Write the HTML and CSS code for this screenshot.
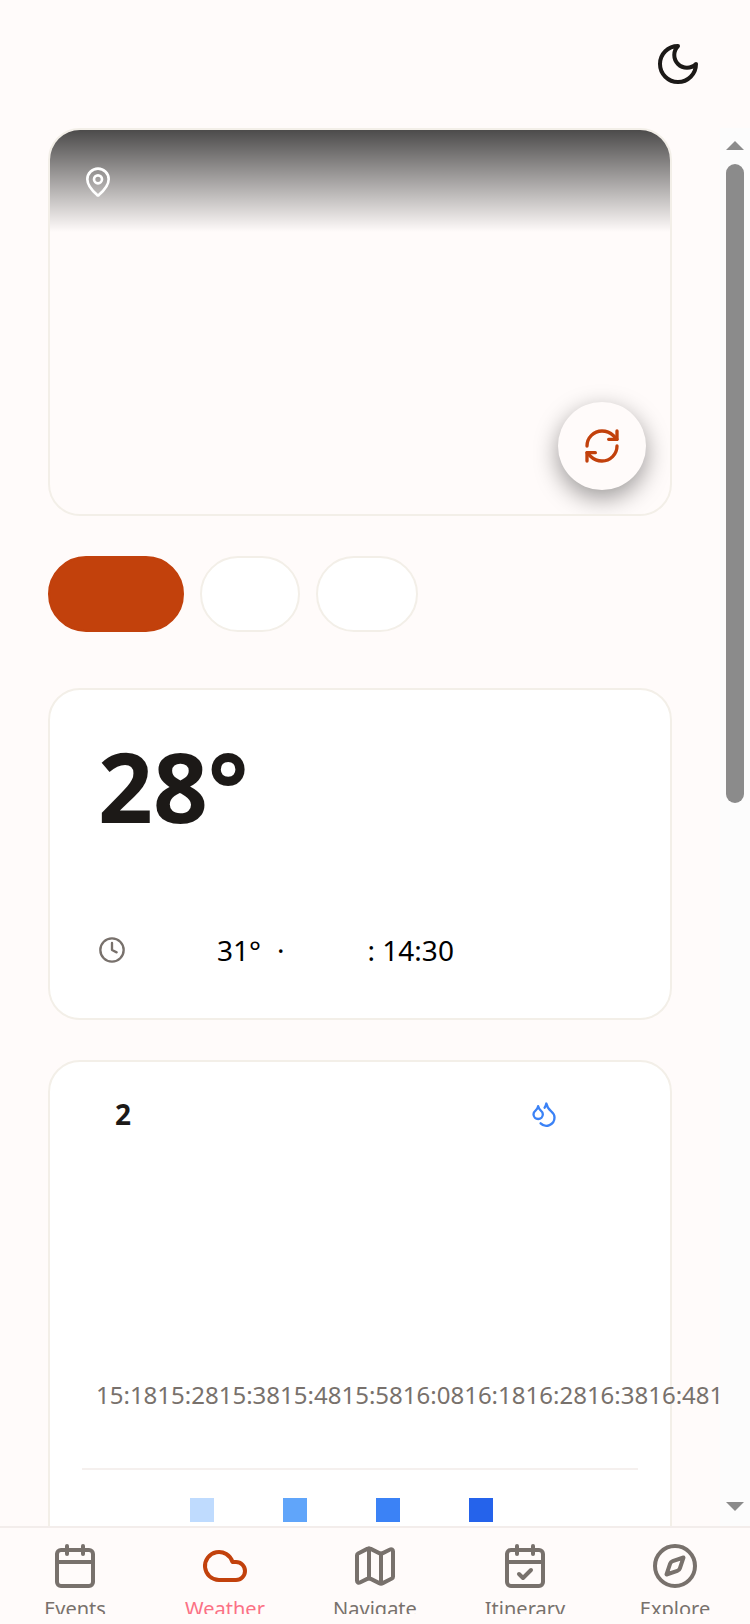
FILE: index.html
```
<!DOCTYPE html>
<html lang="en">
<head>
  <meta charset="UTF-8" />
  <meta name="viewport" content="width=device-width, initial-scale=1.0"/>
  <title>Weather</title>
  <link rel="stylesheet" href="styles.css">
</head>
<body>
  <header class="topbar">
    <button class="theme-btn" aria-label="Toggle theme">
      <svg class="icon icon-lg" viewBox="0 0 24 24"><path d="M12 3a6 6 0 0 0 9 9 9 9 0 1 1-9-9Z"/></svg>
    </button>
  </header>

  <div class="scroll-area">
    <main class="content">
      <section class="card map-card">
        <div class="map-overlay">
          <svg class="icon icon-md" viewBox="0 0 24 24"><path d="M20 10c0 4.993-5.539 10.193-7.399 11.799a1 1 0 0 1-1.202 0C9.539 20.193 4 14.993 4 10a8 8 0 0 1 16 0"/><circle cx="12" cy="10" r="3"/></svg>
        </div>
        <button class="refresh-btn" aria-label="Refresh">
          <svg class="icon" viewBox="0 0 24 24"><path d="M3 12a9 9 0 0 1 9-9 9.75 9.75 0 0 1 6.74 2.74L21 8"/><path d="M21 3v5h-5"/><path d="M21 12a9 9 0 0 1-9 9 9.75 9.75 0 0 1-6.74-2.74L3 16"/><path d="M8 16H3v5"/></svg>
        </button>
      </section>

      <div class="tabs">
        <button class="tab tab-wide active" aria-label="Current location"></button>
        <button class="tab" aria-label="Second location"></button>
        <button class="tab" aria-label="Third location"></button>
      </div>

      <section class="card now-card">
        <div class="temperature">28°</div>
        <div class="condition"></div>
        <div class="now-details">
          <svg class="icon icon-sm" viewBox="0 0 24 24"><circle cx="12" cy="12" r="10"/><path d="M12 6v6l4 2"/></svg>
          <span class="feels-label"></span>
          <span>31°</span>
          <span>·</span>
          <span><span class="updated-label"></span>: 14:30</span>
        </div>
      </section>

      <section class="card rain-card">
        <div class="rain-header">
          <h2>2</h2>
          <svg class="icon icon-sm" viewBox="0 0 24 24"><path d="M7 16.3c2.2 0 4-1.83 4-4.05 0-1.16-.57-2.26-1.71-3.19S7.29 6.75 7 5.3c-.29 1.45-1.14 2.84-2.29 3.76S3 11.1 3 12.25c0 2.22 1.8 4.05 4 4.05z"/><path d="M12.56 6.6A10.97 10.97 0 0 0 14 3.02c.5 2.5 2 4.9 4 6.5s3 3.5 3 5.5a6.98 6.98 0 0 1-11.91 4.97"/></svg>
        </div>
        <div class="rain-plot"></div>
        <div class="rain-times">
          <span>15:18</span><span>15:28</span><span>15:38</span><span>15:48</span><span>15:58</span><span>16:08</span><span>16:18</span><span>16:28</span><span>16:38</span><span>16:48</span><span>16:58</span>
        </div>
        <div class="legend">
          <span class="swatch light"></span>
          <span class="swatch moderate"></span>
          <span class="swatch heavy"></span>
          <span class="swatch intense"></span>
        </div>
      </section>
    </main>

    <div class="scrollbar" aria-hidden="true">
      <span class="arrow arrow-up"></span>
      <div class="track"><div class="thumb"></div></div>
      <span class="arrow arrow-down"></span>
    </div>
  </div>

  <nav class="bottom-nav">
    <a href="#events">
      <svg class="icon icon-lg" viewBox="0 0 24 24"><path d="M8 2v4"/><path d="M16 2v4"/><rect width="18" height="18" x="3" y="4" rx="2"/><path d="M3 10h18"/></svg>
      <span>Events</span>
    </a>
    <a href="#weather" class="current">
      <svg class="icon icon-lg" viewBox="0 0 24 24"><path d="M17.5 19H9a7 7 0 1 1 6.71-9h1.79a4.5 4.5 0 1 1 0 9Z"/></svg>
      <span>Weather</span>
    </a>
    <a href="#navigate">
      <svg class="icon icon-lg" viewBox="0 0 24 24"><path d="M14.106 5.553a2 2 0 0 0 1.788 0l3.659-1.83A1 1 0 0 1 21 4.619v12.764a1 1 0 0 1-.553.894l-4.553 2.277a2 2 0 0 1-1.788 0l-4.212-2.106a2 2 0 0 0-1.788 0l-3.659 1.83A1 1 0 0 1 3 19.381V6.618a1 1 0 0 1 .553-.894l4.553-2.277a2 2 0 0 1 1.788 0z"/><path d="M15 5.764v15"/><path d="M9 3.236v15"/></svg>
      <span>Navigate</span>
    </a>
    <a href="#itinerary">
      <svg class="icon icon-lg" viewBox="0 0 24 24"><path d="M8 2v4"/><path d="M16 2v4"/><rect width="18" height="18" x="3" y="4" rx="2"/><path d="M3 10h18"/><path d="m9 16 2 2 4-4"/></svg>
      <span>Itinerary</span>
    </a>
    <a href="#explore">
      <svg class="icon icon-lg" viewBox="0 0 24 24"><path d="m16.24 7.76-1.804 5.411a2 2 0 0 1-1.265 1.265L7.76 16.24l1.804-5.411a2 2 0 0 1 1.265-1.265z"/><circle cx="12" cy="12" r="10"/></svg>
      <span>Explore</span>
    </a>
  </nav>
</body>
</html>
```

FILE: styles.css
```
* {
  box-sizing: border-box;
}
body {
  margin: 0;
  height: 100vh;
  display: flex;
  flex-direction: column;
  overflow: hidden;
  background: #fffbfa;
  color: #1c1917;
  font-family: "Noto Sans", "Noto Sans CJK TC", sans-serif;
}
button {
  border: none;
  padding: 0;
  background: none;
  color: inherit;
  font: inherit;
  cursor: pointer;
}

/* icons */
.icon {
  display: block;
  flex-shrink: 0;
  width: 40px;
  height: 40px;
  fill: none;
  stroke: currentColor;
  stroke-width: 2;
  stroke-linecap: round;
  stroke-linejoin: round;
}
.icon-sm {
  width: 28px;
  height: 28px;
}
.icon-md {
  width: 32px;
  height: 32px;
}
.icon-lg {
  width: 48px;
  height: 48px;
}

.topbar {
  display: flex;
  justify-content: flex-end;
  padding: 40px 48px;
}

/* scrolling page */
.scroll-area {
  flex: 1;
  min-height: 0;
  display: flex;
}
.content {
  flex: 1;
  min-width: 0;
  padding: 0 48px 48px;
  overflow-x: hidden;
  overflow-y: auto;
  scrollbar-width: none;
}
.scrollbar {
  width: 30px;
  padding: 13px 6px 15px;
  display: flex;
  flex-direction: column;
  background: #fcfcfc;
}
.track {
  flex: 1;
  margin: 14px 0;
}
.thumb {
  height: 48.3%;
  border-radius: 9px;
  background: #8b8b8b;
}
.arrow {
  height: 9px;
  background: #8b8b8b;
}
.arrow-up {
  clip-path: polygon(50% 0, 100% 100%, 0 100%);
}
.arrow-down {
  clip-path: polygon(0 0, 100% 0, 50% 100%);
}

.card {
  background: white;
  border: 2px solid #f3efe8;
  border-radius: 32px;
}

/* map */
.map-card {
  position: relative;
  height: 388px;
  background: #fffbfa;
  overflow: hidden;
}
.map-overlay {
  display: flex;
  align-items: center;
  height: 102px;
  padding: 2px 32px 0;
  color: white;
  background: linear-gradient(rgba(0, 0, 0, 0.7), transparent);
}
.refresh-btn {
  position: absolute;
  right: 24px;
  bottom: 24px;
  width: 88px;
  height: 88px;
  display: flex;
  align-items: center;
  justify-content: center;
  border-radius: 50%;
  background: #fffbfa;
  color: #c2410c;
  box-shadow: 0 8px 24px rgba(0, 0, 0, 0.4);
}

.tabs {
  display: flex;
  gap: 16px;
  margin: 40px 0 56px;
}
.tab {
  width: 100px;
  height: 76px;
  border: 2px solid #f3efe8;
  border-radius: 38px;
  background: white;
}
.tab:last-child {
  width: 102px;
}
.tab-wide {
  width: 136px;
}
.tab.active {
  border-color: #c2410c;
  background: #c2410c;
}

/* current weather */
.now-card {
  padding: 48px;
}
.temperature {
  font-size: 96px;
  line-height: 96px;
  font-weight: 700;
}
.condition {
  height: 96px;
}
.now-details {
  display: flex;
  align-items: center;
  gap: 16px;
  font-size: 28px;
  line-height: 40px;
  color: black;
}
.now-details .icon {
  color: #78716c;
}
.feels-label {
  width: 59px;
}
.updated-label {
  display: inline-block;
  width: 67px;
}

/* rain forecast */
.rain-card {
  margin-top: 40px;
  padding: 32px;
}
.rain-header {
  display: flex;
  align-items: center;
  justify-content: space-between;
  padding: 0 80px 0 33px;
}
.rain-header h2 {
  margin: 0;
  font-size: 28px;
  line-height: 40px;
}
.rain-header .icon {
  color: #3b82f6;
}
.rain-plot {
  height: 245px;
}
.rain-times {
  display: flex;
  padding-left: 14px;
  font-size: 24px;
  line-height: 32px;
  color: #78716c;
}
.legend {
  display: flex;
  gap: 69px;
  margin-top: 57px;
  padding: 28px 0 0 108px;
  border-top: 2px solid #f5f0ee;
}
.swatch {
  width: 24px;
  height: 24px;
}
.light {
  background: #bfdbfe;
}
.moderate {
  background: #60a5fa;
}
.heavy {
  background: #3b82f6;
}
.intense {
  background: #2563eb;
}

/* bottom navigation */
.bottom-nav {
  display: flex;
  padding-bottom: 10px;
  border-top: 2px solid #f3edeb;
}
.bottom-nav a {
  flex: 1;
  height: 86px;
  padding-top: 14px;
  display: flex;
  flex-direction: column;
  align-items: center;
  gap: 5px;
  overflow: hidden;
  color: #78716c;
  font-size: 20px;
  line-height: 28px;
  text-decoration: none;
}
.bottom-nav .current {
  color: #fb7185;
}
.bottom-nav .current .icon {
  color: #c2410c;
}
```
